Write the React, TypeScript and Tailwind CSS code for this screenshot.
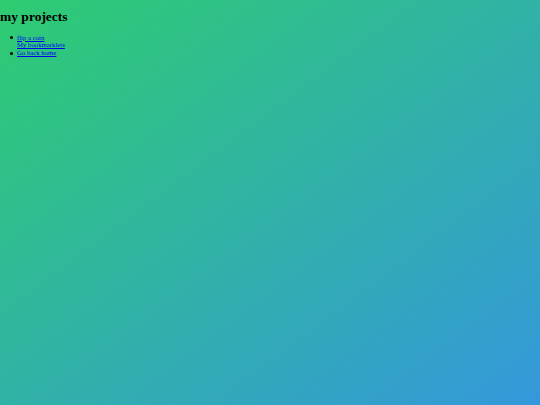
export default function App() {
  return (
    <div
      className="min-h-screen w-full bg-[linear-gradient(to_bottom_right,#2ecc71,#3498db)] text-black"
      style={{ fontFamily: '"Liberation Serif", "Times New Roman", serif' }}
    >
      <div className="text-[6.75px] leading-[1.15] pt-[0.1px]">
        <h1 className="text-[13.5px] font-bold leading-[1.15] my-[9px]">my projects</h1>
        <ul className="pl-[10px] my-[6.75px]">
          <li className="flex">
            <span className="w-[7px] h-[7.8px] flex items-center shrink-0">
              <span className="block w-[3px] h-[3px] rounded-full bg-black" />
            </span>
            <span>
              <a href="#" className="text-[#0000ee] underline">flip a coin</a>
              <br />
              <a href="#" className="text-[#0000ee] underline">My bookmarklets</a>
            </span>
          </li>
          <li className="flex">
            <span className="w-[7px] h-[7.8px] flex items-center shrink-0">
              <span className="block w-[3px] h-[3px] rounded-full bg-black" />
            </span>
            <a href="#" className="text-[#0000ee] underline">Go back home</a>
          </li>
        </ul>
      </div>
    </div>
  );
}
